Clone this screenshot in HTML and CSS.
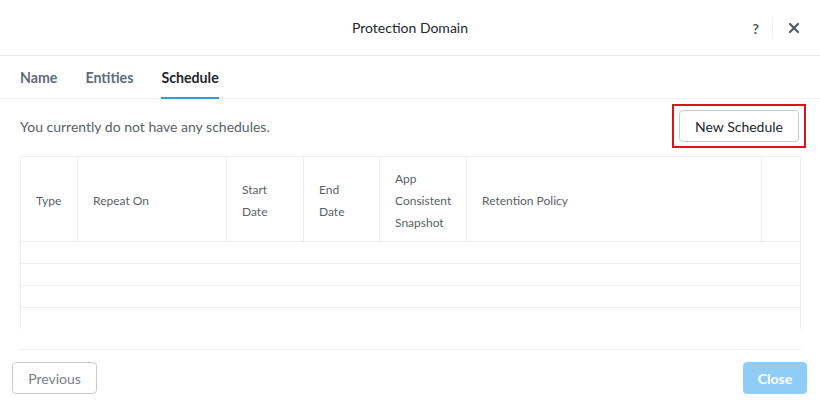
FILE: index.html
```html
<html>
<head>
<title>Protection Domain</title>
<link rel="stylesheet" href="styles.css">
</head>
<body>
<div class="modal">
  <div class="header">
    <div class="title">Protection Domain</div>
    <div class="header-icons">
      <span class="help">?</span>
      <span class="divider"></span>
      <svg class="close-x" width="12" height="12" viewBox="0 0 12 12"><path d="M2 2L10 10M10 2L2 10" stroke="#555a60" stroke-width="2.2" stroke-linecap="round"/></svg>
    </div>
  </div>

  <div class="tabs">
    <span class="tab">Name</span>
    <span class="tab">Entities</span>
    <span class="tab active">Schedule</span>
  </div>

  <div class="body">
    <div class="toolbar">
      <span class="empty-msg">You currently do not have any schedules.</span>
      <span class="highlight"><button class="btn">New Schedule</button></span>
    </div>

    <div class="table">
      <div class="thead">
        <div class="th c1">Type</div>
        <div class="th c2">Repeat On</div>
        <div class="th c3">Start<br>Date</div>
        <div class="th c4">End<br>Date</div>
        <div class="th c5">App<br>Consistent<br>Snapshot</div>
        <div class="th c6">Retention Policy</div>
        <div class="th c7"></div>
      </div>
      <div class="row"></div>
      <div class="row"></div>
      <div class="row"></div>
      <div class="row last"></div>
      <div class="tfoot"></div>
    </div>
  </div>

  <div class="footer">
    <button class="btn prev">Previous</button>
    <button class="btn primary">Close</button>
  </div>
</div>
</body>
</html>
```

FILE: styles.css
```css
body{
margin: 0;
background: #fff;
font-family: Lato, "Open Sans", sans-serif;
color: #22272e;
}
.modal{
width: 820px;
height: 406px;
display: flex;
flex-direction: column;
}
.header{
height: 55px;
border-bottom: 1px solid #e8eaed;
display: flex;
align-items: center;
justify-content: center;
position: relative;
}
.title{
font-size: 14px;
color: #22272e;
margin-top: -1px;
}
.header-icons{
position: absolute;
right: 20px;
top: 18px;
display: flex;
align-items: center;
height: 20px;
}
.help{
font-size: 14px;
font-weight: 700;
color: #555a60;
}
.divider{
width: 1px;
height: 20px;
background: #eceef0;
margin: 0 15px 0 13px;
}
.tabs{
height: 42px;
border-bottom: 1px solid #eceef0;
display: flex;
padding-left: 20px;
gap: 28px;
}
.tab{
font-size: 14.2px;
font-weight: 700;
color: #5f6b7a;
padding-top: 13px;
box-sizing: border-box;
height: 42px;
}
.tab.active{
color: #22272e;
border-bottom: 2px solid #2d9fd8;
height: 43px;
}
.body{
padding: 0 20px;
flex: 1;
}
.toolbar{
height: 57px;
display: flex;
align-items: center;
justify-content: space-between;
}
.empty-msg{
font-size: 14px;
color: #5a5f67;
margin-top: -2px;
}
.highlight{
border: 2px solid #d9141c;
padding: 4px 5px;
margin-right: -6px;
margin-top: -3px;
}
.btn{
font-family: Lato, "Open Sans", sans-serif;
font-size: 14px;
background: #fff;
border: 1px solid #c8ccd2;
border-radius: 4px;
height: 32px;
padding: 0;
width: 120px;
color: #22272e;
}
.table{
border-left: 1px solid #eceef0;
border-right: 1px solid #eceef0;
border-top: 1px solid #eceef0;
width: 779px;
}
.thead{
display: flex;
height: 84px;
border-bottom: 1px solid #eceef0;
}
.th{
font-size: 12px;
color: #5a5f67;
line-height: 22px;
display: flex;
align-items: center;
padding-left: 15px;
padding-top: 3px;
border-right: 1px solid #eceef0;
box-sizing: border-box;
}
.c1{ width: 57px; }
.c2{ width: 149px; }
.c3{ width: 77px; }
.c4{ width: 76px; }
.c5{ width: 87px; }
.c6{ width: 295px; }
.c7{ width: 38px; border-right: none; }
.row{
height: 21px;
border-bottom: 1px solid #eceef0;
}
.row.last{
border-bottom: none;
}
.tfoot{
height: 20px;
border-bottom: 1px solid #eceef0;
margin-left: -1px;
margin-right: -1px;
background: #fff;
}
.footer{
display: flex;
justify-content: space-between;
padding: 0 13px 12px 12px;
}
.prev{
color: #7a7f87;
width: 85px;
}
.primary{
background: #8fcdf6;
border-color: #8fcdf6;
color: #fff;
font-weight: 700;
width: 64px;
}
```
